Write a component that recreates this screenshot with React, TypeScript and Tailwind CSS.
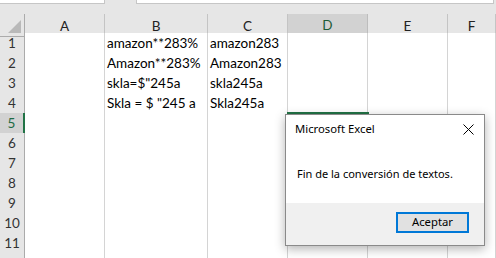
const cols = ["A", "B", "C", "D", "E", "F"];

const data: Record<number, [string, string]> = {
  1: ["amazon**283%", "amazon283"],
  2: ["Amazon**283%", "Amazon283"],
  3: ['skla=$"245a', "skla245a"],
  4: ['Skla = $ "245 a', "Skla245a"],
};

const rows = [1, 2, 3, 4, 5, 6, 7, 8, 9, 10, 11, 12];

const grid = "grid grid-cols-[25px_80px_103px_80px_80px_80px_1fr]";

export default function App() {
  return (
    <div className="relative w-[496px] h-[258px] overflow-hidden bg-[#e6e6e6] font-['Lato',sans-serif]">
      {/* formula bar remnants */}
      <div className="flex h-[14px] items-start">
        <div className="w-[105px] h-[4px] bg-white border-r border-b border-[#c6c6c6]" />
        <div className="ml-[31px] w-[358px] h-[4px] bg-white border-x border-b border-[#c6c6c6]" />
      </div>

      {/* column headers */}
      <div className={`${grid} h-[19px]`}>
        <div className="relative border-r border-b border-[#ababab]">
          <div className="absolute right-[3px] bottom-[3px] w-0 h-0 border-l-[13px] border-l-transparent border-b-[13px] border-b-[#b9b9b9]" />
        </div>
        {cols.map((c) =>
          c === "D" ? (
            <div
              key={c}
              className="flex items-center justify-center bg-[#d2d2d2] border-r border-[#bdbdbd] border-b-2 border-b-[#217346] text-[13.5px] text-[#1e5c37] pt-[1px]"
            >
              {c}
            </div>
          ) : (
            <div
              key={c}
              className="flex items-center justify-center border-r border-b border-r-[#c4c4c4] border-b-[#ababab] text-[13.5px] text-[#222] pt-[1px]"
            >
              {c}
            </div>
          )
        )}
      </div>

      {/* rows */}
      {rows.map((r) => (
        <div key={r} className={`${grid} h-[20px]`}>
          {r === 5 ? (
            <div className="flex items-center justify-center bg-[#d2d2d2] border-b border-[#c6c6c6] border-r-2 border-r-[#217346] text-[13.5px] text-[#1e6b45]">
              {r}
            </div>
          ) : (
            <div className="flex items-center justify-center bg-[#e6e6e6] border-b border-[#c6c6c6] border-r border-r-[#ababab] text-[13.5px] text-[#333]">
              {r < 12 ? r : ""}
            </div>
          )}
          {cols.map((c) => {
            let text = "";
            if (data[r] && c === "B") text = data[r][0];
            if (data[r] && c === "C") text = data[r][1];
            return (
              <div
                key={c}
                className="flex items-end pl-[2px] pb-[1px] bg-white border-r border-b border-[#d4d4d4] text-[13.5px] leading-[18px] text-black whitespace-nowrap"
              >
                {text}
              </div>
            );
          })}
        </div>
      ))}

      {/* active cell D5 */}
      <div className="absolute left-[287px] top-[112px] w-[82px] h-[22px] border-2 border-[#217346]" />

      {/* message box */}
      <div className="absolute left-[285px] top-[114px] w-[200px] h-[132px] flex flex-col bg-white border border-[#8a8a8a] shadow-[0_3px_10px_rgba(0,0,0,0.3)] font-['Noto_Sans',sans-serif] text-black">
        <div className="flex h-[88px] flex-col">
          <div className="flex items-center justify-between h-[28px] pl-[9px] pr-[10px]">
            <span className="text-[11.3px]">Microsoft Excel</span>
            <svg width="11" height="11" viewBox="0 0 11 11" className="text-black">
              <path d="M0.5 0.5 L10.5 10.5 M10.5 0.5 L0.5 10.5" stroke="currentColor" strokeWidth="1" />
            </svg>
          </div>
          <div className="pl-[11px] pt-[23px] text-[11px]">Fin de la conversión de textos.</div>
        </div>
        <div className="flex flex-1 items-start justify-end bg-[#f0f0f0] pt-[9px] pr-[15px]">
          <button className="flex items-center justify-center w-[73px] h-[21px] bg-[#e1e1e1] border-2 border-[#0078d7] text-[11.3px] text-black">
            Aceptar
          </button>
        </div>
      </div>
    </div>
  );
}
